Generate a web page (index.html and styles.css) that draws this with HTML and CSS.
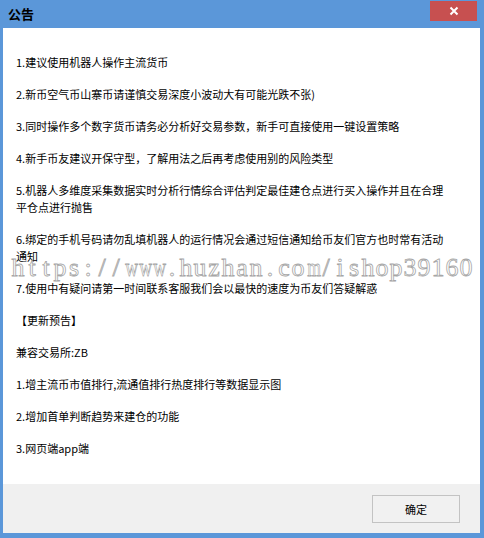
FILE: index.html
```
<!DOCTYPE html>
<html lang="zh-CN">
<head>
<meta charset="utf-8">
<title>公告</title>
<link rel="stylesheet" href="styles.css">
</head>
<body>
<div class="window">
  <div class="titlebar">
    <span class="title">公告</span>
    <button class="close" aria-label="关闭">
      <svg width="10" height="10" viewBox="0 0 10 10"><path d="M1.5 1.5 L8.5 8.5 M8.5 1.5 L1.5 8.5" stroke="#fff" stroke-width="2" fill="none"/></svg>
    </button>
  </div>
  <div class="content">
    <div class="notes">
      <p>1.建议使用机器人操作主流货币</p>
      <p>2.新币空气币山寨币请谨慎交易深度小波动大有可能光跌不张)</p>
      <p>3.同时操作多个数字货币请务必分析好交易参数，新手可直接使用一键设置策略</p>
      <p>4.新手币友建议开保守型，了解用法之后再考虑使用别的风险类型</p>
      <p>5.机器人多维度采集数据实时分析行情综合评估判定最佳建仓点进行买入操作并且在合理平仓点进行抛售</p>
      <p>6.绑定的手机号码请勿乱填机器人的运行情况会通过短信通知给币友们官方也时常有活动通知</p>
      <p>7.使用中有疑问请第一时间联系客服我们会以最快的速度为币友们答疑解惑</p>
      <p>【更新预告】</p>
      <p>兼容交易所:ZB</p>
      <p>1.增主流币市值排行,流通值排行热度排行等数据显示图</p>
      <p>2.增加首单判断趋势来建仓的功能</p>
      <p>3.网页端app端</p>
    </div>
  </div>
  <div class="footer">
    <button class="ok">确定</button>
  </div>
  <div class="watermark"><span>h</span><span>t</span><span>t</span><span>p</span><span>s</span><span>:</span><span>/</span><span>/</span><span class="wide">w</span><span class="wide">w</span><span class="wide">w</span><span>.</span><span>h</span><span>u</span><span>z</span><span>h</span><span>a</span><span>n</span><span>.</span><span>c</span><span>o</span><span class="wide">m</span><span>/</span><span>i</span><span>s</span><span>h</span><span>o</span><span>p</span><span>3</span><span>9</span><span>1</span><span>6</span><span>0</span></div>
</div>
</body>
</html>
```
FILE: styles.css
```
html, body {
  margin: 0;
  padding: 0;
}
body {
  width: 484px;
  height: 538px;
  background: #5b97d9;
  overflow: hidden;
  font-family: "Noto Sans CJK SC", "Liberation Sans", sans-serif;
}
.window {
  position: relative;
  box-sizing: border-box;
  width: 484px;
  height: 538px;
  padding: 0 4px 5px 3px;
  display: flex;
  flex-direction: column;
}
.titlebar {
  height: 28px;
  display: flex;
  align-items: flex-start;
}
.title {
  margin: 5px 0 0 5px;
  font-size: 13px;
  font-weight: bold;
  line-height: 17px;
  color: #000;
}
.close {
  margin: 1px 3px 0 auto;
  width: 47px;
  height: 20px;
  border: 0;
  padding: 0;
  background: #c75050;
  display: flex;
  align-items: center;
  justify-content: center;
}
.close svg {
  display: block;
}
.content {
  flex: 1;
  background: #fff;
  padding: 26px 0 0 13px;
}
.notes {
  width: 432px;
}
.notes p {
  margin: 0 0 15px;
  font-size: 11px;
  line-height: 17px;
  color: #000;
}
.footer {
  height: 49px;
  background: #f0f0f0;
  display: flex;
  justify-content: flex-end;
  align-items: flex-start;
}
.ok {
  margin: 11px 20px 0 0;
  width: 88px;
  height: 28px;
  box-sizing: border-box;
  border: 1px solid #c3c3c3;
  background: #f1f1f1;
  font-family: "Noto Sans CJK SC", "Liberation Sans", sans-serif;
  font-size: 11px;
  color: #000;
  padding: 0;
}
.watermark {
  position: absolute;
  left: 11px;
  top: 256px;
  display: flex;
  font-family: "Liberation Serif", "DejaVu Serif", serif;
  font-size: 26px;
  line-height: 24px;
  color: #fff;
  -webkit-text-stroke: 0.8px #a6a6a6;
  white-space: nowrap;
  pointer-events: none;
}
.watermark span {
  display: block;
  width: 14px;
  text-align: center;
}
.watermark .wide {
  transform: scaleX(0.68);
}
```
